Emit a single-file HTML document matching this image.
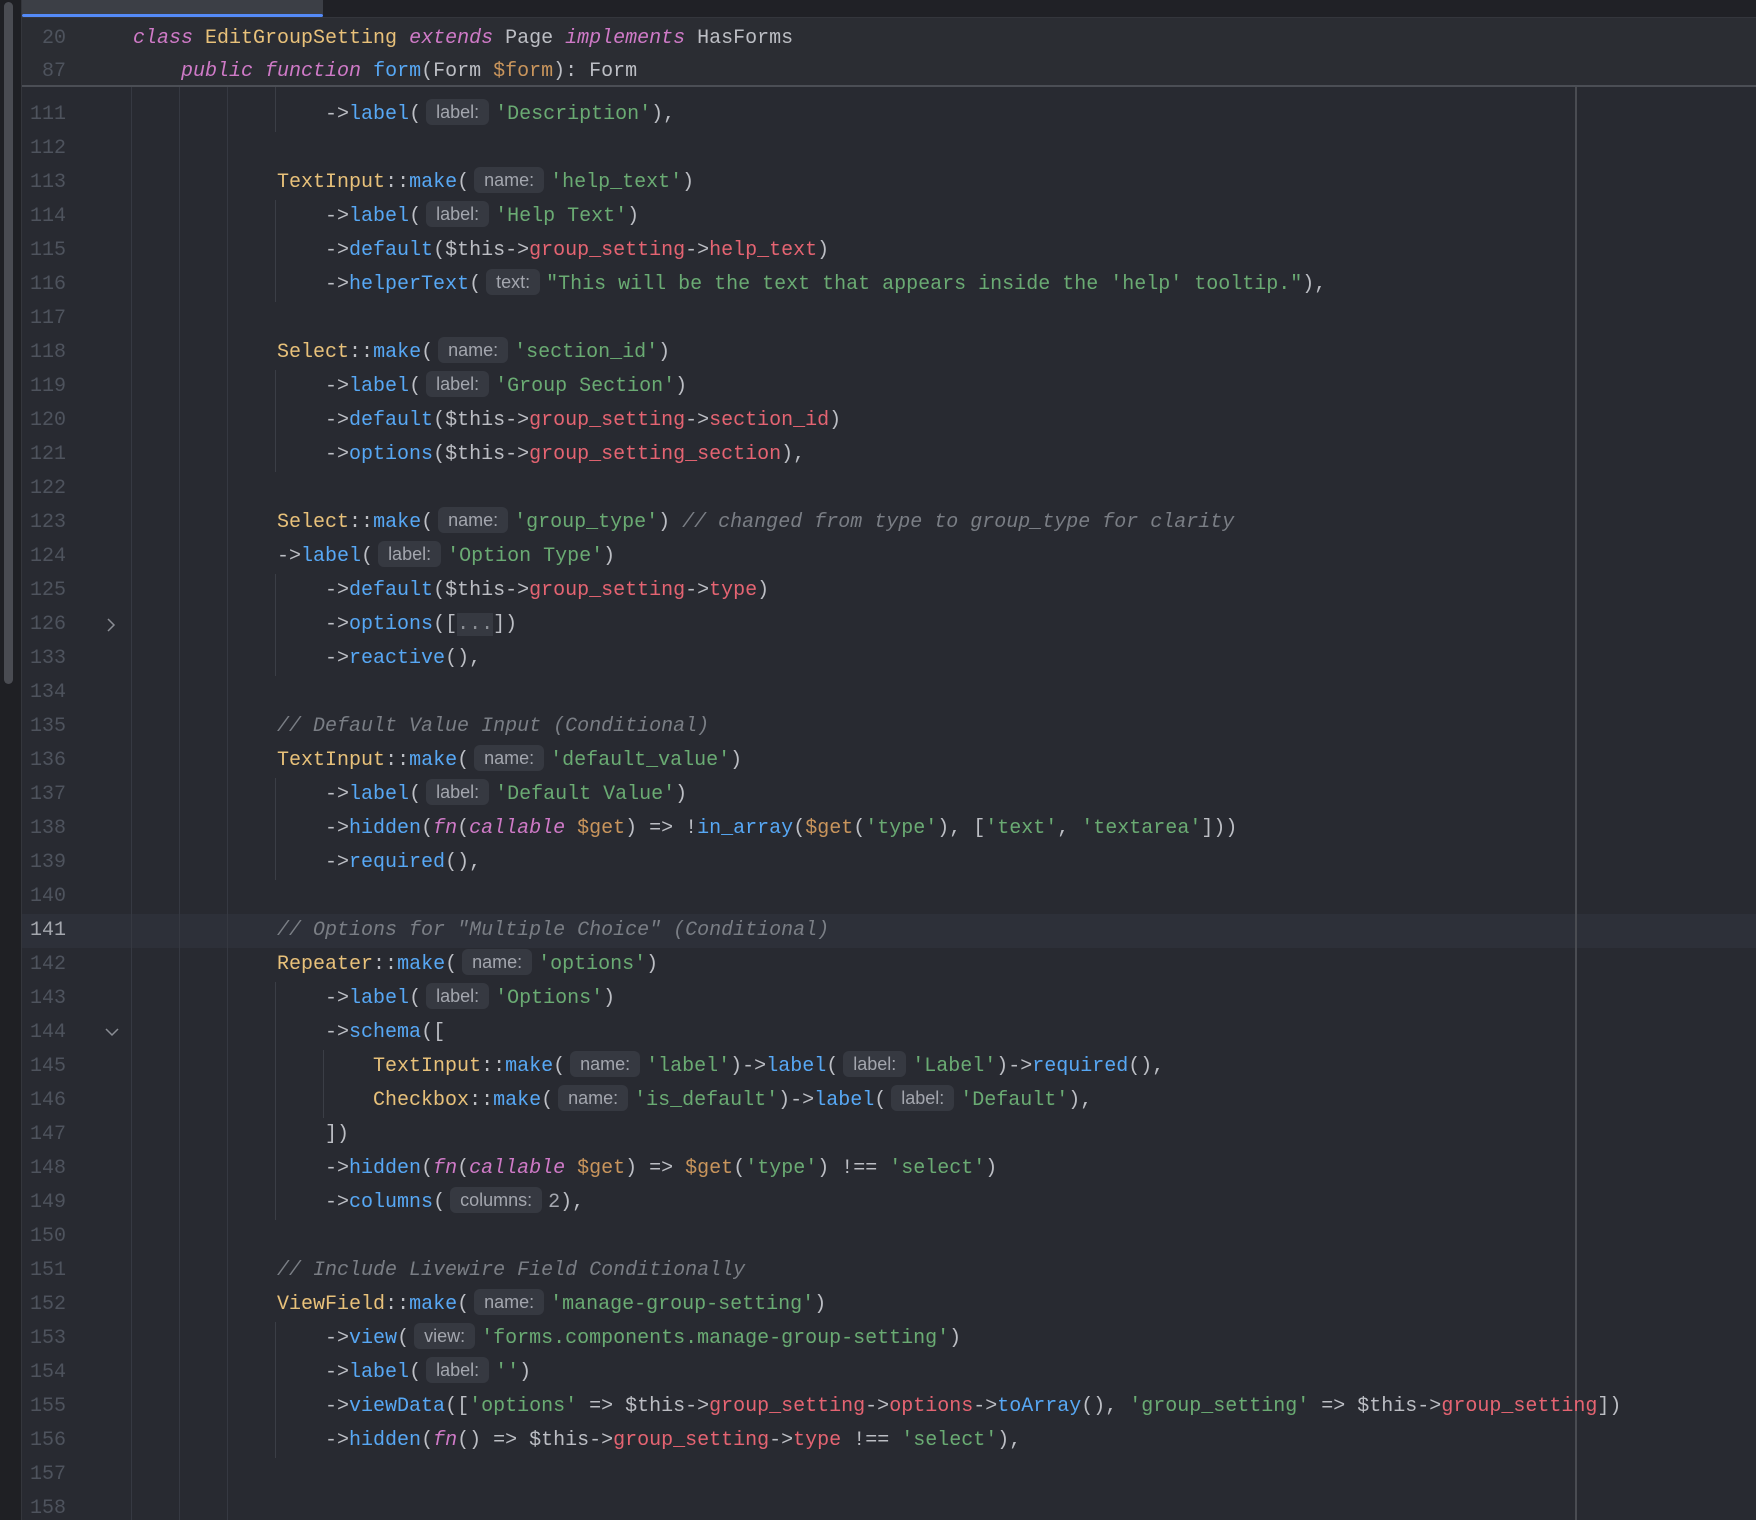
<!DOCTYPE html>
<html><head><meta charset="utf-8"><style>
html,body{margin:0;padding:0;width:1756px;height:1520px;overflow:hidden;background:#282a31;}
body{position:relative;font-family:"Liberation Mono","DejaVu Sans Mono",monospace;font-size:20px;color:#bcbec4;}
.strip{position:absolute;left:0;top:0;width:21px;height:1520px;background:#1f2024;}
.sb{position:absolute;left:4px;top:2px;width:9px;height:682px;background:#4a4c52;border-radius:5px;}
.gborder{position:absolute;left:21px;top:0;width:1px;height:1520px;background:#34363c;}
.tabbar{position:absolute;left:22px;top:0;right:0;height:17px;background:#202126;border-bottom:1px solid #34363c;}
.tab{position:absolute;left:22px;top:0;width:301px;height:14px;background:#3c3f46;}
.tabline{position:absolute;left:22px;top:14px;width:301px;height:3px;background:#548af7;border-radius:2px;}
.hdr{position:absolute;left:22px;top:18px;right:0;height:67px;background:#2b2d33;border-bottom:2px solid #4b4e55;z-index:3;}
.row{position:absolute;left:0;height:34px;line-height:34px;white-space:pre;width:1756px;}
.ln{position:absolute;left:22px;width:44px;text-align:right;color:#4e535d;}
.code{position:absolute;left:133px;}
.g{position:absolute;top:87px;width:1px;height:1433px;background:#363942;}
.seg{position:absolute;width:1px;background:#3b3e46;}
.margin{position:absolute;left:1575px;top:87px;width:2px;height:1433px;background:#4a4c52;}
.hl{position:absolute;left:22px;right:0;background:#2d3039;height:34px;}
.k{color:#cf7ac7;font-style:italic}
.c{color:#e8c17a}
.m{color:#57a8f5}
.s{color:#6aab73}
.p{color:#e56472}
.v{color:#c9955c}
.cm{color:#7a7e85;font-style:italic}
.h{display:inline-block;font-family:"Liberation Sans","DejaVu Sans",sans-serif;font-size:18px;line-height:26px;height:26px;padding:0 10px;margin:0 6px 0 5px;background:#363941;color:#a3a6ae;border-radius:6px;vertical-align:1px;}
.fold{background:#363941;color:#8c8f96;}
.arr{position:absolute;left:104px;top:9px;}
</style></head><body>
<div class="strip"><div class="sb"></div></div>
<div class="gborder"></div>
<div class="tabbar"></div><div class="tab"></div><div class="tabline"></div>
<div class="hdr">
 <div class="row" style="top:4px;left:-22px"><span class="ln" style="left:22px">20</span><span class="code"><span class="k">class</span> <span class="c">EditGroupSetting</span> <span class="k">extends</span> Page <span class="k">implements</span> HasForms</span></div>
 <div class="row" style="top:37px;left:-22px"><span class="ln" style="left:22px">87</span><span class="code">    <span class="k">public</span> <span class="k">function</span> <span class="m">form</span>(Form <span class="v">$form</span>): Form</span></div>
</div>
<div class="hl" style="top:914px"></div>
<div class="g" style="left:131px"></div>
<div class="g" style="left:179px"></div>
<div class="g" style="left:227px"></div>
<div class="seg" style="left:275px;top:87px;height:45px"></div>
<div class="seg" style="left:275px;top:200px;height:102px"></div>
<div class="seg" style="left:275px;top:370px;height:102px"></div>
<div class="seg" style="left:275px;top:574px;height:102px"></div>
<div class="seg" style="left:275px;top:778px;height:102px"></div>
<div class="seg" style="left:275px;top:982px;height:238px"></div>
<div class="seg" style="left:323px;top:1050px;height:68px"></div>
<div class="seg" style="left:275px;top:1322px;height:136px"></div>
<div class="margin"></div>

<div class="row" style="top:98px"><span class="ln">111</span><span class="code">                <span>-></span><span class="m">label</span>(<span class="h">label:</span><span class="s">'Description'</span>),</span></div>
<div class="row" style="top:132px"><span class="ln">112</span></div>
<div class="row" style="top:166px"><span class="ln">113</span><span class="code">            <span class="c">TextInput</span>::<span class="m">make</span>(<span class="h">name:</span><span class="s">'help_text'</span>)</span></div>
<div class="row" style="top:200px"><span class="ln">114</span><span class="code">                -><span class="m">label</span>(<span class="h">label:</span><span class="s">'Help Text'</span>)</span></div>
<div class="row" style="top:234px"><span class="ln">115</span><span class="code">                -><span class="m">default</span>($this-><span class="p">group_setting</span>-><span class="p">help_text</span>)</span></div>
<div class="row" style="top:268px"><span class="ln">116</span><span class="code">                -><span class="m">helperText</span>(<span class="h">text:</span><span class="s">"This will be the text that appears inside the 'help' tooltip."</span>),</span></div>
<div class="row" style="top:302px"><span class="ln">117</span></div>
<div class="row" style="top:336px"><span class="ln">118</span><span class="code">            <span class="c">Select</span>::<span class="m">make</span>(<span class="h">name:</span><span class="s">'section_id'</span>)</span></div>
<div class="row" style="top:370px"><span class="ln">119</span><span class="code">                -><span class="m">label</span>(<span class="h">label:</span><span class="s">'Group Section'</span>)</span></div>
<div class="row" style="top:404px"><span class="ln">120</span><span class="code">                -><span class="m">default</span>($this-><span class="p">group_setting</span>-><span class="p">section_id</span>)</span></div>
<div class="row" style="top:438px"><span class="ln">121</span><span class="code">                -><span class="m">options</span>($this-><span class="p">group_setting_section</span>),</span></div>
<div class="row" style="top:472px"><span class="ln">122</span></div>
<div class="row" style="top:506px"><span class="ln">123</span><span class="code">            <span class="c">Select</span>::<span class="m">make</span>(<span class="h">name:</span><span class="s">'group_type'</span>) <span class="cm">// changed from type to group_type for clarity</span></span></div>
<div class="row" style="top:540px"><span class="ln">124</span><span class="code">            -><span class="m">label</span>(<span class="h">label:</span><span class="s">'Option Type'</span>)</span></div>
<div class="row" style="top:574px"><span class="ln">125</span><span class="code">                -><span class="m">default</span>($this-><span class="p">group_setting</span>-><span class="p">type</span>)</span></div>
<div class="row" style="top:608px"><span class="ln">126</span><svg class="arr" width="14" height="16" viewBox="0 0 14 16"><path d="M4 2 L10 8 L4 14" fill="none" stroke="#8a8d94" stroke-width="1.5"/></svg><span class="code">                -><span class="m">options</span>([<span class="fold">...</span>])</span></div>
<div class="row" style="top:642px"><span class="ln">133</span><span class="code">                -><span class="m">reactive</span>(),</span></div>
<div class="row" style="top:676px"><span class="ln">134</span></div>
<div class="row" style="top:710px"><span class="ln">135</span><span class="code">            <span class="cm">// Default Value Input (Conditional)</span></span></div>
<div class="row" style="top:744px"><span class="ln">136</span><span class="code">            <span class="c">TextInput</span>::<span class="m">make</span>(<span class="h">name:</span><span class="s">'default_value'</span>)</span></div>
<div class="row" style="top:778px"><span class="ln">137</span><span class="code">                -><span class="m">label</span>(<span class="h">label:</span><span class="s">'Default Value'</span>)</span></div>
<div class="row" style="top:812px"><span class="ln">138</span><span class="code">                -><span class="m">hidden</span>(<span class="k">fn</span>(<span class="k">callable</span> <span class="v">$get</span>) => !<span class="m">in_array</span>(<span class="v">$get</span>(<span class="s">'type'</span>), [<span class="s">'text'</span>, <span class="s">'textarea'</span>]))</span></div>
<div class="row" style="top:846px"><span class="ln">139</span><span class="code">                -><span class="m">required</span>(),</span></div>
<div class="row" style="top:880px"><span class="ln">140</span></div>
<div class="row" style="top:914px"><span class="ln" style="color:#a4a7ae">141</span><span class="code">            <span class="cm">// Options for "Multiple Choice" (Conditional)</span></span></div>
<div class="row" style="top:948px"><span class="ln">142</span><span class="code">            <span class="c">Repeater</span>::<span class="m">make</span>(<span class="h">name:</span><span class="s">'options'</span>)</span></div>
<div class="row" style="top:982px"><span class="ln">143</span><span class="code">                -><span class="m">label</span>(<span class="h">label:</span><span class="s">'Options'</span>)</span></div>
<div class="row" style="top:1016px"><span class="ln">144</span><svg class="arr" width="16" height="14" viewBox="0 0 16 14"><path d="M2 4 L8 10 L14 4" fill="none" stroke="#8a8d94" stroke-width="1.5"/></svg><span class="code">                -><span class="m">schema</span>([</span></div>
<div class="row" style="top:1050px"><span class="ln">145</span><span class="code">                    <span class="c">TextInput</span>::<span class="m">make</span>(<span class="h">name:</span><span class="s">'label'</span>)-><span class="m">label</span>(<span class="h">label:</span><span class="s">'Label'</span>)-><span class="m">required</span>(),</span></div>
<div class="row" style="top:1084px"><span class="ln">146</span><span class="code">                    <span class="c">Checkbox</span>::<span class="m">make</span>(<span class="h">name:</span><span class="s">'is_default'</span>)-><span class="m">label</span>(<span class="h">label:</span><span class="s">'Default'</span>),</span></div>
<div class="row" style="top:1118px"><span class="ln">147</span><span class="code">                ])</span></div>
<div class="row" style="top:1152px"><span class="ln">148</span><span class="code">                -><span class="m">hidden</span>(<span class="k">fn</span>(<span class="k">callable</span> <span class="v">$get</span>) => <span class="v">$get</span>(<span class="s">'type'</span>) !== <span class="s">'select'</span>)</span></div>
<div class="row" style="top:1186px"><span class="ln">149</span><span class="code">                -><span class="m">columns</span>(<span class="h">columns:</span><span style="color:#a3a6ae">2</span>),</span></div>
<div class="row" style="top:1220px"><span class="ln">150</span></div>
<div class="row" style="top:1254px"><span class="ln">151</span><span class="code">            <span class="cm">// Include Livewire Field Conditionally</span></span></div>
<div class="row" style="top:1288px"><span class="ln">152</span><span class="code">            <span class="c">ViewField</span>::<span class="m">make</span>(<span class="h">name:</span><span class="s">'manage-group-setting'</span>)</span></div>
<div class="row" style="top:1322px"><span class="ln">153</span><span class="code">                -><span class="m">view</span>(<span class="h">view:</span><span class="s">'forms.components.manage-group-setting'</span>)</span></div>
<div class="row" style="top:1356px"><span class="ln">154</span><span class="code">                -><span class="m">label</span>(<span class="h">label:</span><span class="s">''</span>)</span></div>
<div class="row" style="top:1390px"><span class="ln">155</span><span class="code">                -><span class="m">viewData</span>([<span class="s">'options'</span> => $this-><span class="p">group_setting</span>-><span class="p">options</span>-><span class="m">toArray</span>(), <span class="s">'group_setting'</span> => $this-><span class="p">group_setting</span>])</span></div>
<div class="row" style="top:1424px"><span class="ln">156</span><span class="code">                -><span class="m">hidden</span>(<span class="k">fn</span>() => $this-><span class="p">group_setting</span>-><span class="p">type</span> !== <span class="s">'select'</span>),</span></div>
<div class="row" style="top:1458px"><span class="ln">157</span></div>
<div class="row" style="top:1492px"><span class="ln">158</span></div>
</body></html>
